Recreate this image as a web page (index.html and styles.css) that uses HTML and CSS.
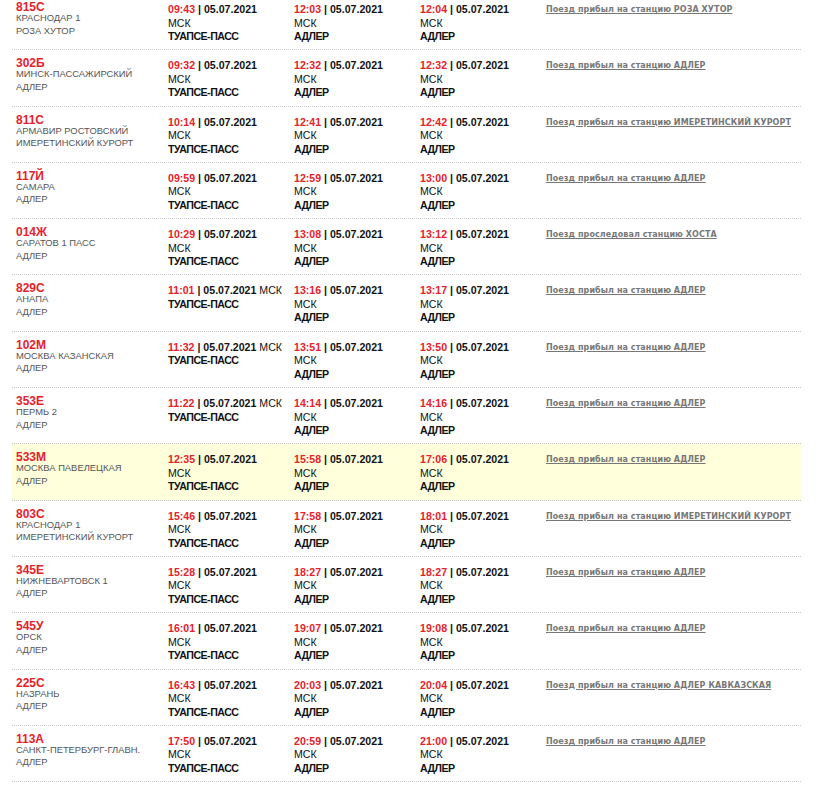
FILE: index.html
```html
<!DOCTYPE html>
<html lang="ru">
<head>
    <meta charset="UTF-8">
    <title>Табло прибытия</title>
    <link rel="stylesheet" href="styles.css">
</head>
<body>

    <div class="board" id="board"></div>

    <script>
        // Поезда, прибывающие на станцию
        const trains = [
            ['815С', 'КРАСНОДАР 1', 'РОЗА ХУТОР', '09:43', '12:03', '12:04', 'Поезд прибыл на станцию', 'РОЗА ХУТОР'],
            ['302Б', 'МИНСК-ПАССАЖИРСКИЙ', 'АДЛЕР', '09:32', '12:32', '12:32', 'Поезд прибыл на станцию', 'АДЛЕР'],
            ['811С', 'АРМАВИР РОСТОВСКИЙ', 'ИМЕРЕТИНСКИЙ КУРОРТ', '10:14', '12:41', '12:42', 'Поезд прибыл на станцию', 'ИМЕРЕТИНСКИЙ КУРОРТ'],
            ['117Й', 'САМАРА', 'АДЛЕР', '09:59', '12:59', '13:00', 'Поезд прибыл на станцию', 'АДЛЕР'],
            ['014Ж', 'САРАТОВ 1 ПАСС', 'АДЛЕР', '10:29', '13:08', '13:12', 'Поезд проследовал станцию', 'ХОСТА'],
            ['829С', 'АНАПА', 'АДЛЕР', '11:01', '13:16', '13:17', 'Поезд прибыл на станцию', 'АДЛЕР', true],
            ['102М', 'МОСКВА КАЗАНСКАЯ', 'АДЛЕР', '11:32', '13:51', '13:50', 'Поезд прибыл на станцию', 'АДЛЕР', true],
            ['353Е', 'ПЕРМЬ 2', 'АДЛЕР', '11:22', '14:14', '14:16', 'Поезд прибыл на станцию', 'АДЛЕР', true],
            ['533М', 'МОСКВА ПАВЕЛЕЦКАЯ', 'АДЛЕР', '12:35', '15:58', '17:06', 'Поезд прибыл на станцию', 'АДЛЕР', false, true],
            ['803С', 'КРАСНОДАР 1', 'ИМЕРЕТИНСКИЙ КУРОРТ', '15:46', '17:58', '18:01', 'Поезд прибыл на станцию', 'ИМЕРЕТИНСКИЙ КУРОРТ'],
            ['345Е', 'НИЖНЕВАРТОВСК 1', 'АДЛЕР', '15:28', '18:27', '18:27', 'Поезд прибыл на станцию', 'АДЛЕР'],
            ['545У', 'ОРСК', 'АДЛЕР', '16:01', '19:07', '19:08', 'Поезд прибыл на станцию', 'АДЛЕР'],
            ['225С', 'НАЗРАНЬ', 'АДЛЕР', '16:43', '20:03', '20:04', 'Поезд прибыл на станцию', 'АДЛЕР КАВКАЗСКАЯ'],
            ['113А', 'САНКТ-ПЕТЕРБУРГ-ГЛАВН.', 'АДЛЕР', '17:50', '20:59', '21:00', 'Поезд прибыл на станцию', 'АДЛЕР']
        ];

        function timeCell(time, station, sameLine) {
            const sep = sameLine ? ' ' : '<br>';
            return `
                <div class="cell time">
                    <span class="hour">${time}</span> | 05.07.2021${sep}<span class="zone">МСК</span><br>
                    <span class="station">${station}</span>
                </div>`;
        }

        function renderBoard() {
            const board = document.getElementById('board');
            board.innerHTML = '';

            trains.forEach(t => {
                const row = document.createElement('div');
                row.classList.add('row');
                if (t[9]) row.classList.add('current');

                row.innerHTML = `
                    <div class="cell train">
                        <div class="number">${t[0]}</div>
                        <div class="route">${t[1]}<br>${t[2]}</div>
                    </div>
                    ${timeCell(t[3], 'ТУАПСЕ-ПАСС', t[8])}
                    ${timeCell(t[4], 'АДЛЕР')}
                    ${timeCell(t[5], 'АДЛЕР')}
                    <div class="cell status"><a href="#">${t[6]} ${t[7]}</a></div>
                `;
                board.appendChild(row);
            });
        }

        renderBoard();
    </script>
</body>
</html>
```

FILE: styles.css
```css
body {
    margin: 0;
    padding: 0;
    background-color: #fff;
    font-family: 'Liberation Sans', Arial, sans-serif;
    color: #000;
}

.board {
    margin: -6px 0 0 12px;
    width: 789px;
}

.row {
    display: grid;
    grid-template-columns: 152px 126px 126px 126px 1fr;
    height: 56.3px;
    box-sizing: border-box;
    padding-left: 4px;
    border-bottom: 1px dotted #c8c8c8;
}

.row.current {
    background-color: #ffffdc;
}

.train {
    padding-top: 9px;
}

.number {
    font-size: 12px;
    line-height: 9px;
    font-weight: bold;
    color: #e5222b;
}

.route {
    font-size: 9.4px;
    line-height: 12.5px;
    color: #555;
}

.time {
    padding-top: 9px;
    font-size: 10.6px;
    line-height: 13.5px;
    font-weight: bold;
    color: #111;
}

.hour {
    color: #e5222b;
}

.zone {
    font-weight: normal;
}

.station {
    letter-spacing: -0.5px;
}

.status {
    padding-top: 9px;
    font-family: 'DejaVu Sans', Verdana, sans-serif;
    font-size: 8px;
    line-height: 13px;
    font-weight: bold;
    letter-spacing: 0.08px;
}

.status a {
    color: #777;
    text-decoration: underline;
}
```
